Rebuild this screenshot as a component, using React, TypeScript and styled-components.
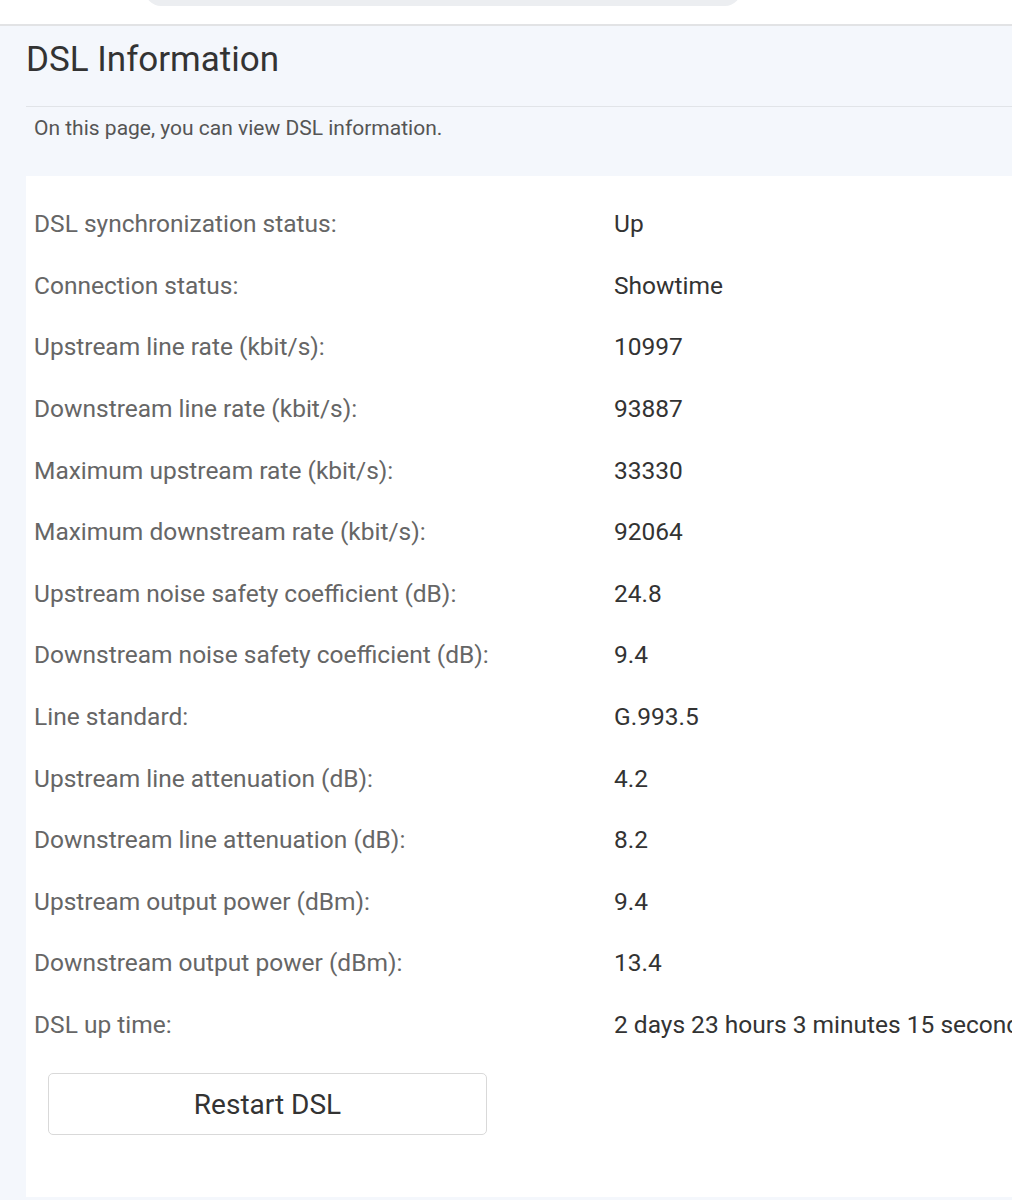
import React from "react";
import styled, { createGlobalStyle } from "styled-components";

const GlobalStyle = createGlobalStyle`
  body {
    margin: 0;
    background: #ffffff;
    font-family: Roboto, "Liberation Sans", sans-serif;
  }
`;

const rows: [string, string][] = [
  ["DSL synchronization status:", "Up"],
  ["Connection status:", "Showtime"],
  ["Upstream line rate (kbit/s):", "10997"],
  ["Downstream line rate (kbit/s):", "93887"],
  ["Maximum upstream rate (kbit/s):", "33330"],
  ["Maximum downstream rate (kbit/s):", "92064"],
  ["Upstream noise safety coefficient (dB):", "24.8"],
  ["Downstream noise safety coefficient (dB):", "9.4"],
  ["Line standard:", "G.993.5"],
  ["Upstream line attenuation (dB):", "4.2"],
  ["Downstream line attenuation (dB):", "8.2"],
  ["Upstream output power (dBm):", "9.4"],
  ["Downstream output power (dBm):", "13.4"],
  ["DSL up time:", "2 days 23 hours 3 minutes 15 seconds"],
];

const TopBar = styled.div`
  height: 24px;
  background: #fff;
  border-bottom: 2px solid #e2e3e5;
  overflow: hidden;
  padding-left: 145px;
`;

const Pill = styled.div`
  width: 596px;
  height: 30px;
  margin-top: -24px;
  background: #eceef1;
  border-radius: 0 0 16px 16px;
`;

const Page = styled.div`
  background: #f4f7fc;
  padding: 0 0 0 26px;
  overflow: hidden;
`;

const Title = styled.h1`
  margin: 0;
  height: 80px;
  padding-bottom: 14px;
  box-sizing: border-box;
  display: flex;
  align-items: center;
  font-size: 35px;
  font-weight: 400;
  color: #333;
`;

const Divider = styled.div`
  height: 1px;
  background: #e1e4e8;
`;

const Description = styled.p`
  margin: 0;
  padding: 9px 8px 0;
  height: 69px;
  box-sizing: border-box;
  font-size: 21px;
  color: #555;
`;

const Card = styled.div`
  background: #fff;
  padding: 17px 0 62px 8px;
  margin-bottom: 3px;
`;

const Row = styled.div`
  display: grid;
  grid-template-columns: 580px 1fr;
  height: 61.6px;
  align-items: center;
  font-size: 24.5px;
  white-space: nowrap;
`;

const Label = styled.span`
  color: #666;
`;

const Value = styled.span`
  color: #333;
`;

const Button = styled.button`
  display: block;
  margin: 18px 0 0 14px;
  width: 439px;
  height: 62px;
  background: #fff;
  border: 1.5px solid #d9d9d9;
  border-radius: 5px;
  font-family: inherit;
  font-size: 28px;
  color: #333;
`;

export default function App() {
  return (
    <>
      <GlobalStyle />
      <TopBar>
        <Pill />
      </TopBar>
      <Page>
        <Title>DSL Information</Title>
        <Divider />
        <Description>On this page, you can view DSL information.</Description>
        <Card>
          {rows.map(([label, value]) => (
            <Row key={label}>
              <Label>{label}</Label>
              <Value>{value}</Value>
            </Row>
          ))}
          <Button>Restart DSL</Button>
        </Card>
      </Page>
    </>
  );
}
